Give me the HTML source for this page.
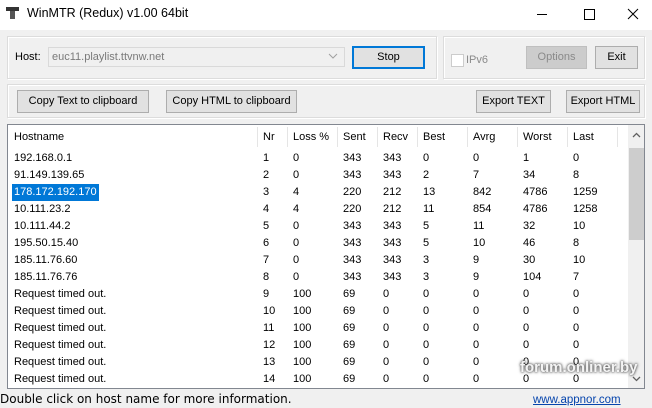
<!DOCTYPE html>
<html><head><meta charset="utf-8"><style>
*{margin:0;padding:0;box-sizing:border-box}
body{width:652px;height:407px;background:#f0f0f0;font-family:"Liberation Sans",sans-serif;font-size:11px;color:#000;position:relative;overflow:hidden}
.a{position:absolute}
.btn{position:absolute;background:#e1e1e1;border:1px solid #adadad;text-align:center;font-size:11px;line-height:21px}
.grp{position:absolute;border:1px solid #dcdcdc;box-shadow:inset 1px 1px 0 #fff,1px 1px 0 #fff}
.row{position:absolute;left:0;height:17px;line-height:17px;width:620px}
.row span{position:absolute}
</style></head><body>
<div class="a" style="left:0;top:0;width:652px;height:30px;background:#fff"></div>
<div class="a" style="left:6px;top:7px;width:13px;height:4px;background:#333"></div>
<div class="a" style="left:10px;top:11px;width:5px;height:8px;background:#555"></div>
<div class="a" style="left:27px;top:4px;font-size:12.5px;line-height:18px">WinMTR (Redux) v1.00 64bit</div>
<svg class="a" style="left:530px;top:6px" width="115" height="16"><line x1="7" y1="8.5" x2="17" y2="8.5" stroke="#000"/><rect x="54.5" y="3.5" width="10" height="10" fill="none" stroke="#000"/><path d="M98 3 L108 13 M108 3 L98 13" stroke="#000"/></svg>

<div class="grp" style="left:7px;top:36px;width:430px;height:43px"></div>
<div class="grp" style="left:443px;top:36px;width:202px;height:43px"></div>
<div class="a" style="left:15px;top:49px;line-height:16px">Host:</div>
<div class="a" style="left:48px;top:47px;width:297px;height:20px;background:#f0f0f0;border:1px solid #d9d9d9;color:#7a7a7a;line-height:18px;padding-left:3px">euc11.playlist.ttvnw.net</div>
<svg class="a" style="left:327px;top:51px" width="12" height="10"><path d="M2 3 L6 7 L10 3" stroke="#a0a0a0" fill="none"/></svg>
<div class="btn" style="left:352px;top:46px;width:73px;height:23px;border:2px solid #0078d7;line-height:19px">Stop</div>
<div class="a" style="left:451px;top:54px;width:13px;height:13px;border:1px solid #ccc;background:#fff"></div>
<div class="a" style="left:466px;top:52px;color:#8a8a8a;line-height:16px">IPv6</div>
<div class="btn" style="left:526px;top:46px;width:61px;height:23px;background:#ccc;border-color:#bfbfbf;color:#8a8a8a">Options</div>
<div class="btn" style="left:595px;top:46px;width:43px;height:23px">Exit</div>

<div class="grp" style="left:7px;top:84px;width:638px;height:34px"></div>
<div class="btn" style="left:17px;top:90px;width:132px;height:23px">Copy Text to clipboard</div>
<div class="btn" style="left:166px;top:90px;width:131px;height:23px">Copy HTML to clipboard</div>
<div class="btn" style="left:476px;top:90px;width:75px;height:23px">Export TEXT</div>
<div class="btn" style="left:566px;top:90px;width:74px;height:23px">Export HTML</div>

<div class="a" style="left:7px;top:124px;width:638px;height:265px;background:#fff;border:1px solid #828790;overflow:hidden">
<div class="a" style="left:0;top:0;width:620px;height:24px">
<span class="a" style="left:6px;top:6px">Hostname</span>
<span class="a" style="left:255px;top:6px">Nr</span>
<span class="a" style="left:285px;top:6px">Loss %</span>
<span class="a" style="left:335px;top:6px">Sent</span>
<span class="a" style="left:375px;top:6px">Recv</span>
<span class="a" style="left:415px;top:6px">Best</span>
<span class="a" style="left:465px;top:6px">Avrg</span>
<span class="a" style="left:515px;top:6px">Worst</span>
<span class="a" style="left:565px;top:6px">Last</span>
<div class="a" style="left:249px;top:2px;width:1px;height:20px;background:#e5e5e5"></div>
<div class="a" style="left:279px;top:2px;width:1px;height:20px;background:#e5e5e5"></div>
<div class="a" style="left:329px;top:2px;width:1px;height:20px;background:#e5e5e5"></div>
<div class="a" style="left:369px;top:2px;width:1px;height:20px;background:#e5e5e5"></div>
<div class="a" style="left:409px;top:2px;width:1px;height:20px;background:#e5e5e5"></div>
<div class="a" style="left:459px;top:2px;width:1px;height:20px;background:#e5e5e5"></div>
<div class="a" style="left:509px;top:2px;width:1px;height:20px;background:#e5e5e5"></div>
<div class="a" style="left:559px;top:2px;width:1px;height:20px;background:#e5e5e5"></div>
<div class="a" style="left:609px;top:2px;width:1px;height:20px;background:#e5e5e5"></div>
</div>
<div id="rows"></div>
<div class="a" style="left:620px;top:0;width:17px;height:263px;background:#f0f0f0"></div>
<div class="a" style="left:621px;top:23px;width:15px;height:92px;background:#cdcdcd"></div>
<svg class="a" style="left:620px;top:4px" width="17" height="12"><path d="M5 8 L8.5 4.5 L12 8" stroke="#606060" fill="none" stroke-width="1.3"/></svg>
<svg class="a" style="left:620px;top:248px" width="17" height="12"><path d="M5 4 L8.5 7.5 L12 4" stroke="#606060" fill="none" stroke-width="1.3"/></svg>
</div>
<div class="a" style="left:0;top:392px;font-family:'DejaVu Sans',sans-serif;font-size:12px;line-height:15px">Double click on host name for more information.</div>
<div class="a" style="left:533px;top:392px;color:#0645ad;text-decoration:underline;font-size:11.5px;line-height:16px">www.appnor.com</div>
<div class="a" style="left:520px;top:359px;color:#f4f4f4;font-weight:bold;font-size:15px;text-shadow:0 0 3px #555,0 0 2px #555">forum.onliner.by</div>
<script>
var d=[["192.168.0.1",1,0,343,343,0,0,1,0],["91.149.139.65",2,0,343,343,2,7,34,8],["178.172.192.170",3,4,220,212,13,842,4786,1259],["10.111.23.2",4,4,220,212,11,854,4786,1258],["10.111.44.2",5,0,343,343,5,11,32,10],["195.50.15.40",6,0,343,343,5,10,46,8],["185.11.76.60",7,0,343,343,3,9,30,10],["185.11.76.76",8,0,343,343,3,9,104,7]];
for(var i=9;i<=14;i++)d.push(["Request timed out.",i,100,69,0,0,0,0,0]);
var x=[6,255,285,335,375,415,465,515,565],h="";
d.forEach(function(r,k){h+='<div class="row" style="top:'+(25+k*17)+'px">';r.forEach(function(v,j){var s=(k==2&&j==0)?'background:#0078d7;color:#fff;padding:0 2px;left:'+(x[j]-2)+'px':'left:'+x[j]+'px';h+='<span style="'+s+'">'+v+'</span>'});h+='</div>'});
document.getElementById("rows").innerHTML=h;
</script>
</body></html>
